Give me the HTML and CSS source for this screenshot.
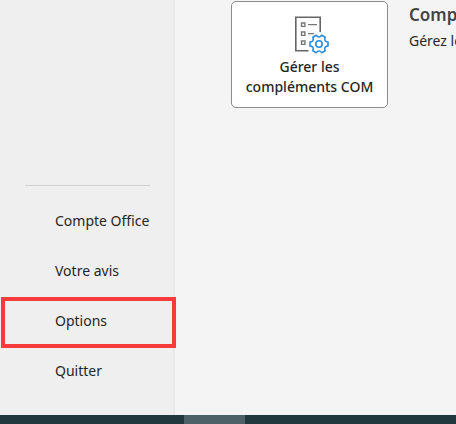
FILE: index.html
```html
<!DOCTYPE html>
<html lang="fr">
<head>
<meta charset="utf-8">
<meta name="viewport" content="width=device-width, initial-scale=1">
<title>Informations</title>
<link rel="stylesheet" href="styles.css">
</head>
<body>
<div class="backstage">
  <nav class="sidebar">
    <hr class="divider">
    <a class="item" href="#compte">Compte Office</a>
    <a class="item" href="#avis">Votre avis</a>
    <a class="item marked" href="#options">Options</a>
    <a class="item" href="#quitter">Quitter</a>
  </nav>
  <main class="content">
    <button class="tile" type="button">
      <svg class="tile-icon" width="40" height="40" viewBox="-2 0 40 40" fill="none" aria-hidden="true">
        <path d="M16.5 36.8H3.8V3.2H28.2V18" stroke="#666" stroke-width="1.6"/>
        <g stroke="#777" stroke-width="1.4">
          <path d="M9.5 9h3.4v3.4H9.5zM9.5 18h3.4v3.4H9.5zM9.5 27h3.4v3.4H9.5z"/>
          <path d="M16 10.6h9M16 19.6h6"/>
        </g>
        <g transform="translate(27 30)" stroke="#2a8dd4" stroke-width="1.6" stroke-linejoin="round">
          <path fill="#fff" d="M9-1.9V1.9Q4.5 2.6 6.2 6.8L2.8 8.7Q0 5.2-2.8 8.7L-6.2 6.8Q-4.5 2.6-9 1.9V-1.9Q-4.5-2.6-6.2-6.8L-2.8-8.7Q0-5.2 2.8-8.7L6.2-6.8Q4.5-2.6 9-1.9Z"/>
          <circle r="3.2"/>
        </g>
      </svg>
      <span>Gérer les compléments COM</span>
    </button>
    <section class="details">
      <h2>Compléments COM</h2>
      <p>Gérez les compléments COM</p>
    </section>
  </main>
</div>
<footer class="taskbar"><div class="task"></div></footer>
</body>
</html>
```
FILE: styles.css
```css
* {
  box-sizing: border-box;
}

body {
  margin: 0;
  min-height: 100vh;
  display: flex;
  flex-direction: column;
  overflow: hidden;
  background: #f4f4f4;
  color: #262626;
  font: 14px/20px "Noto Sans", "Open Sans", sans-serif;
}

.backstage {
  flex: 1;
  display: flex;
}

.sidebar {
  flex: 0 0 175px;
  display: flex;
  flex-direction: column;
  justify-content: flex-end;
  padding-bottom: 19px;
  background: #efefef;
  border-right: 2px solid #e9e9e9;
}

.divider {
  width: 125px;
  margin: 0 0 10px 25px;
  border: 0;
  border-top: 1px solid #d0d0d0;
}

.item {
  position: relative;
  padding: 15px 0 15px 55px;
  color: inherit;
  text-decoration: none;
  white-space: nowrap;
}

.marked::after {
  content: "";
  position: absolute;
  inset: 1px -3px -2px 1px;
  border: 4px solid #f73b3a;
}

.content {
  flex: 1;
  min-width: 0;
  display: flex;
  align-items: flex-start;
  gap: 21px;
  padding: 1px 0 0 56px;
  overflow: hidden;
}

.tile {
  flex: 0 0 157px;
  display: flex;
  flex-direction: column;
  align-items: center;
  gap: 3px;
  padding: 12px 8px 10px;
  background: #fff;
  border: 1px solid #8c8c8c;
  border-radius: 5px;
  color: #262626;
  font: 500 14px/20px "Noto Sans", "Open Sans", sans-serif;
}

.details {
  flex: none;
  white-space: nowrap;
}

.details h2 {
  margin: 2px 0 5px;
  color: #444;
  font-size: 17px;
  line-height: 23px;
  font-weight: 600;
}

.details p {
  margin: 0;
}

.taskbar {
  height: 9px;
  padding-left: 184px;
  background: #21383f;
}

.task {
  width: 61px;
  height: 100%;
  background: #4d6168;
}
```
